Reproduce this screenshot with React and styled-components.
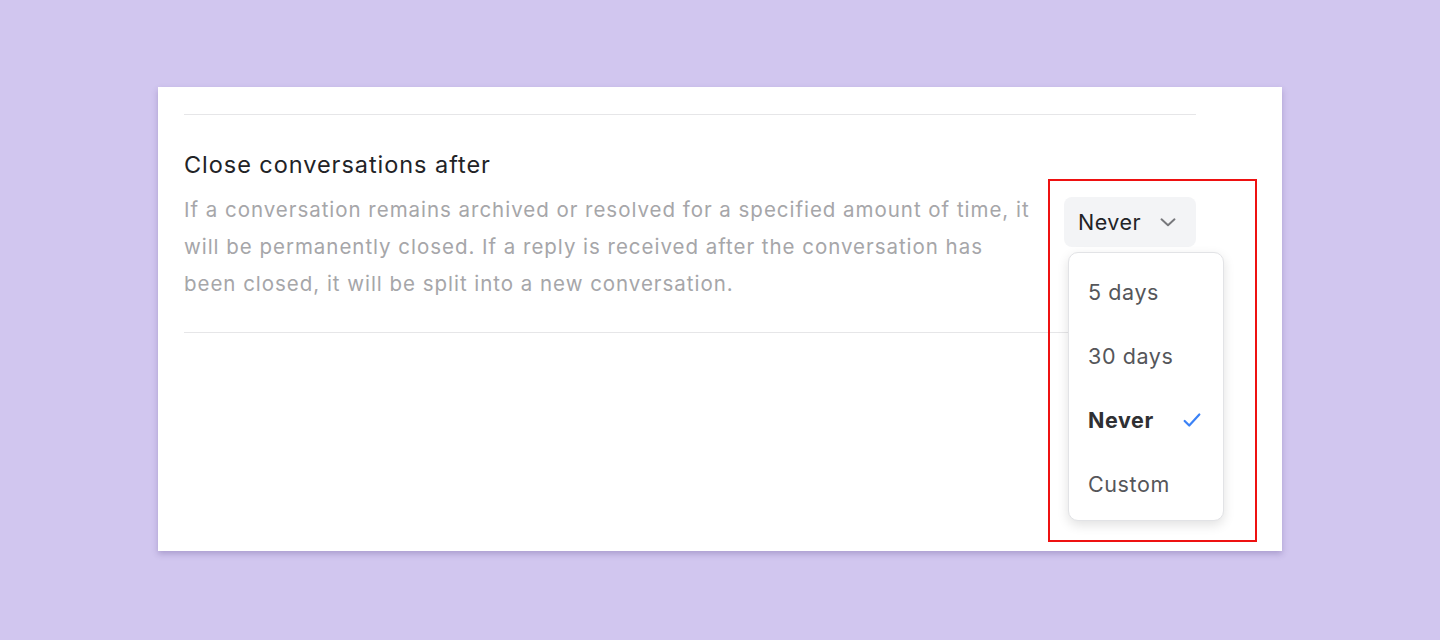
import React from "react";
import styled, { createGlobalStyle } from "styled-components";

const Global = createGlobalStyle`
  html, body { margin: 0; padding: 0; }
  body {
    background: #d1c6ef;
    font-family: Inter, "Noto Sans", "Liberation Sans", sans-serif;
    -webkit-font-smoothing: antialiased;
  }
`;

const Page = styled.div`
  width: 1440px;
  height: 640px;
  padding-top: 87px;
  padding-left: 158px;
  box-sizing: border-box;
`;

const Card = styled.div`
  width: 1124px;
  height: 464px;
  background: #ffffff;
  box-sizing: border-box;
  padding: 27px 86px 0 26px;
  box-shadow: 0 3px 6px rgba(60, 40, 110, 0.25);
`;

const Divider = styled.div`
  height: 1px;
  background: #e6e6e8;
`;

const Section = styled.div`
  padding: 35px 0 30px;
`;

const Title = styled.h2`
  margin: 0;
  font-size: 23.5px;
  line-height: 30px;
  font-weight: 400;
  letter-spacing: 0.95px;
  color: #222326;
`;

const Row = styled.div`
  display: flex;
  justify-content: space-between;
  align-items: flex-start;
  margin-top: 11px;
`;

const Description = styled.p`
  margin: 0;
  width: 852px;
  font-size: 20.5px;
  line-height: 37px;
  letter-spacing: 0.97px;
  color: #a6a6a9;
`;

const Control = styled.div`
  position: relative;
  margin-top: 6px;
`;

const Trigger = styled.button`
  display: flex;
  align-items: center;
  gap: 14px;
  height: 50px;
  width: 132px;
  box-sizing: border-box;
  padding: 0 14px;
  border: none;
  border-radius: 8px;
  background: #f3f4f6;
  font-family: inherit;
  font-size: 21.5px;
  letter-spacing: 0.5px;
  color: #222326;
`;

const Menu = styled.ul`
  position: absolute;
  top: 55px;
  left: 4px;
  width: 156px;
  height: 269px;
  box-sizing: border-box;
  margin: 0;
  padding: 7px 0 0;
  list-style: none;
  background: #ffffff;
  border: 1px solid #e2e3e6;
  border-radius: 10px;
  box-shadow: 0 4px 12px rgba(0, 0, 0, 0.12);
`;

const Item = styled.li`
  display: flex;
  align-items: center;
  justify-content: space-between;
  height: 64px;
  padding: 0 20px 0 19px;
  font-size: 21.5px;
  letter-spacing: 0.6px;
  font-weight: ${(p) => (p.$selected ? 700 : 400)};
  color: ${(p) => (p.$selected ? "#2f3033" : "#55565a")};
`;

const Highlight = styled.div`
  position: absolute;
  top: -18px;
  left: -16px;
  width: 209px;
  height: 363px;
  box-sizing: border-box;
  border: 2.5px solid #ee1111;
  pointer-events: none;
`;

const Chevron = () => (
  <svg width="26" height="26" viewBox="0 0 24 24" fill="none" stroke="#77787c" strokeWidth="1.8" strokeLinecap="round" strokeLinejoin="round">
    <path d="M6 9.5l6 5.5 6-5.5" />
  </svg>
);

const Check = () => (
  <svg width="22" height="22" viewBox="0 0 24 24" fill="none" stroke="#3b82f6" strokeWidth="2.4" strokeLinecap="round" strokeLinejoin="round">
    <path d="M4 13l5 5L20 6" />
  </svg>
);

const options = ["5 days", "30 days", "Never", "Custom"];

export default function App() {
  const selected = "Never";
  return (
    <>
      <Global />
      <Page>
        <Card>
          <Divider />
          <Section>
            <Title>Close conversations after</Title>
            <Row>
              <Description>
                If a conversation remains archived or resolved for a specified amount of time, it
                will be permanently closed. If a reply is received after the conversation has
                been closed, it will be split into a new conversation.
              </Description>
              <Control>
                <Trigger>
                  {selected}
                  <Chevron />
                </Trigger>
                <Menu>
                  {options.map((o) => (
                    <Item key={o} $selected={o === selected}>
                      {o}
                      {o === selected && <Check />}
                    </Item>
                  ))}
                </Menu>
                <Highlight />
              </Control>
            </Row>
          </Section>
          <Divider />
        </Card>
      </Page>
    </>
  );
}
